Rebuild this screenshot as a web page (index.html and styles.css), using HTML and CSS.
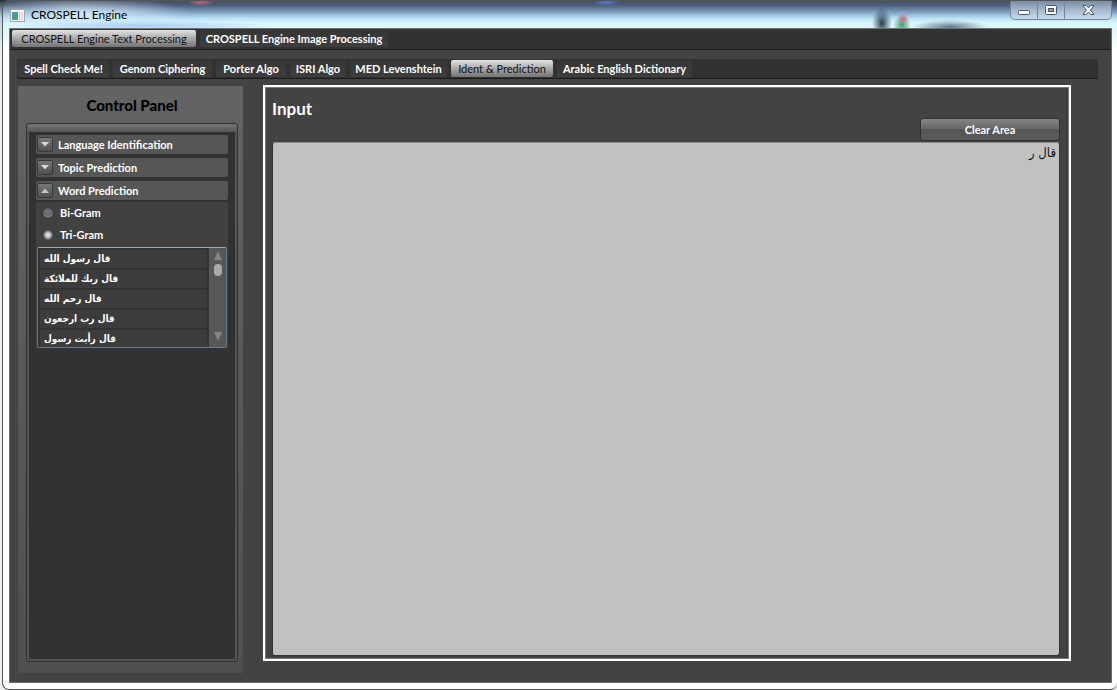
FILE: index.html
```html
<!DOCTYPE html>
<html lang="en">
<head>
<meta charset="utf-8">
<title>CROSPELL Engine</title>
<link rel="stylesheet" href="styles.css">
</head>
<body>
<div class="window">
  <header class="titlebar">
    <svg class="app-icon" width="15" height="13" viewBox="0 0 15 13" aria-hidden="true">
      <defs><linearGradient id="pane" x1="0" y1="0" x2="1" y2="1"><stop offset="0" stop-color="#4a8fb8"/><stop offset="1" stop-color="#4f9f6c"/></linearGradient></defs>
      <rect x=".5" y=".5" width="14" height="12" fill="#f4f4f4" stroke="#a5a5a5"/>
      <rect x="2" y="3" width="6" height="8" fill="url(#pane)"/>
      <rect x="9" y="3" width="1" height="8" fill="#c2ccd0"/>
      <rect x="11" y="3" width="2" height="8" fill="#d9dfe1"/>
    </svg>
    <span class="window-title">CROSPELL Engine</span>
    <div class="window-buttons">
      <button class="win-btn" aria-label="Minimize"><svg width="12" height="12" viewBox="0 0 12 12"><rect x=".5" y="6.5" width="11" height="4" rx="1" fill="#fff" stroke="#4d5365"/></svg></button>
      <button class="win-btn" aria-label="Maximize"><svg width="12" height="12" viewBox="0 0 12 12"><rect x=".5" y="1.5" width="11" height="9" rx="1" fill="#fff" stroke="#4d5365"/><rect x="3.5" y="4.5" width="5" height="3" fill="#8c98ac" stroke="#4d5365"/></svg></button>
      <button class="win-btn win-close" aria-label="Close"><svg width="13" height="12" viewBox="0 0 13 12"><path d="M1 1.5h3.2l2.3 2.4 2.3-2.4H12L8.6 6l3.4 4.5H8.8L6.500 8.100 4.200 10.500H1L4.400 6z" fill="#fff" stroke="#4d5365"/></svg></button>
    </div>
  </header>

  <div class="client">
    <nav class="tabs tabs-main">
      <button class="tab selected w-text">CROSPELL Engine Text Processing</button>
      <button class="tab w-image">CROSPELL Engine Image Processing</button>
    </nav>

    <nav class="tabs tabs-sub">
      <button class="tab w-spell">Spell Check Me!</button>
      <button class="tab w-genom">Genom Ciphering</button>
      <button class="tab w-porter">Porter Algo</button>
      <button class="tab w-isri">ISRI Algo</button>
      <button class="tab w-med">MED Levenshtein</button>
      <button class="tab selected w-ident">Ident &amp; Prediction</button>
      <button class="tab w-arabic">Arabic English Dictionary</button>
    </nav>

    <main class="workspace">
      <aside class="control-panel">
        <h2 class="panel-title">Control Panel</h2>
        <div class="frame">
          <div class="frame-body">
            <button class="section"><span class="expander"><svg width="8" height="5" viewBox="0 0 8 5"><path d="M0 0h8L4 4.500z" fill="#d8d8d8"/></svg></span>Language Identification</button>
            <button class="section"><span class="expander"><svg width="8" height="5" viewBox="0 0 8 5"><path d="M0 0h8L4 4.500z" fill="#d8d8d8"/></svg></span>Topic Prediction</button>
            <button class="section" aria-expanded="true"><span class="expander"><svg width="8" height="5" viewBox="0 0 8 5"><path d="M0 5h8L4 .5z" fill="#c4c4c4"/></svg></span>Word Prediction</button>
            <div class="section-content">
              <label class="option"><input type="radio" name="gram">Bi-Gram</label>
              <label class="option"><input type="radio" name="gram" checked>Tri-Gram</label>
              <div class="listbox">
                <ul class="items">
                  <li dir="rtl">قال رسول الله</li>
                  <li dir="rtl">قال ربك للملائكة</li>
                  <li dir="rtl">قال رحم الله</li>
                  <li dir="rtl">قال رب ارجعون</li>
                  <li dir="rtl">قال رأيت رسول</li>
                </ul>
                <div class="scrollbar">
                  <svg width="8" height="9" viewBox="0 0 8 9"><path d="M4 0l4 9H0z" fill="#858585"/></svg>
                  <span class="thumb"></span>
                  <svg width="8" height="9" viewBox="0 0 8 9"><path d="M0 0h8L4 9z" fill="#858585"/></svg>
                </div>
              </div>
            </div>
          </div>
        </div>
      </aside>

      <section class="input-panel">
        <div class="input-head">
          <label class="input-title" for="input">Input</label>
          <button class="clear">Clear Area</button>
        </div>
        <textarea id="input" class="input-area" dir="rtl">قال ر</textarea>
      </section>
    </main>
  </div>
</div>
</body>
</html>
```

FILE: styles.css
```css
* { box-sizing: border-box; }

body {
  margin: 0;
  min-height: 100vh;
  display: flex;
  background: linear-gradient(#26303f, #b9d6ea 18px, #f4f4f4 60px, #f0f0f0);
  font: 700 11px/16px Lato, "DejaVu Sans", sans-serif;
  color: #fff;
}

button, input, textarea { font: inherit; color: inherit; margin: 0; }

.window {
  flex: 1;
  display: flex;
  flex-direction: column;
  margin-left: 2px;
  padding: 0 5px 6px 6px;
  border: 1px solid #555;
  border-right: 0;
  border-radius: 7px;
  background:
    radial-gradient(ellipse 10px 16px at 879px 22px, #2d3d52 0, transparent 100%),
    radial-gradient(circle at 900px 18px, #c26a78 0, transparent 6px),
    radial-gradient(circle at 899px 24px, #3f9a70 0, transparent 9px),
    radial-gradient(ellipse 38px 7px at 947px 26px, #61768a 0, transparent 100%),
    radial-gradient(ellipse 130px 6px at 140px 25px, #aacdf2 0, transparent 100%),
    radial-gradient(ellipse 110px 18px at 80px 14px, #d3eafa 0, transparent 100%),
    radial-gradient(ellipse 14px 4px at 198px 1px, #b56876 0, transparent 100%),
    radial-gradient(ellipse 14px 4px at 603px 1px, #5c78c8 0, transparent 100%),
    linear-gradient(#454f66 0, #4b5b74 4px, #7b9dc0 11px, #b8dff4 17px, #daf8fc 22px, #dff6fb 28px, #fff 48px);
}

.titlebar {
  display: flex;
  height: 27px;
  padding-left: 1px;
}
.app-icon { margin-top: 8px; }
.window-title {
  margin: 5px auto 0 6px;
  font-weight: 400;
  font-size: 12px;
  line-height: 18px;
  color: #000;
}
.window-buttons {
  display: flex;
  height: 19px;
  border: 1px solid #74859c;
  border-top: 0;
  border-radius: 0 0 5px 5px;
  background: linear-gradient(#7c8ba5, #a7b8cd 9px, #c5dcea);
  overflow: hidden;
}
.win-btn {
  display: flex;
  align-items: center;
  justify-content: center;
  width: 27px;
  padding: 0;
  border: 0;
  border-right: 1px solid #74859c;
  background: none;
}
.win-close { width: 46px; border-right: 0; }

.client {
  flex: 1;
  display: flex;
  flex-direction: column;
  border: 1px solid #707070;
  background: #434343;
}

.tabs {
  display: flex;
  gap: 4px;
  height: 20px;
  padding: 1px 1px 2px;
  background: #323232;
  border-bottom: 1px solid #1c1c1c;
}
.tabs-main { padding-left: 2px; height: 21px; }
.tabs-sub {
  margin: 9px 13px 0 7px;
  border-radius: 2px;
}
.tab {
  height: 17px;
  padding: 0;
  border: 0;
  border-radius: 2px;
  background: linear-gradient(#353535, #3e3e3e);
  white-space: nowrap;
  line-height: 16px;
}
.tab.selected {
  background: linear-gradient(#e4e4e4, #a9a9a9 50%, #737373);
  color: #111;
  font-weight: 400;
}
.w-text { width: 184px; }
.w-image { width: 188px; }
.w-spell { width: 91px; }
.w-genom { width: 99px; }
.w-porter { width: 70px; }
.w-isri { width: 56px; }
.w-med { width: 97px; }
.w-ident { width: 102px; }
.w-arabic { width: 135px; }

.workspace {
  flex: 1;
  display: flex;
  gap: 20px;
  padding: 6px 40px 9px 8px;
}

.control-panel {
  width: 225px;
  display: flex;
  flex-direction: column;
  margin-top: 1px;
  padding: 9px 5px 11px 8px;
  background: linear-gradient(#636363, #4f4f4f);
}
.panel-title {
  margin: 0 0 8px;
  font-size: 15px;
  font-weight: 900;
  line-height: 20px;
  text-align: center;
  color: #000;
}
.frame {
  flex: 1;
  display: flex;
  padding: 8px 2px 2px;
  border: 1px solid #303030;
  border-radius: 3px;
  background: linear-gradient(#777, #555 8px);
}
.frame-body {
  flex: 1;
  display: flex;
  flex-direction: column;
  gap: 4px;
  padding: 3px 7px;
  background: #323232;
}
.section {
  display: flex;
  align-items: center;
  gap: 5px;
  height: 19px;
  padding: 0 1px;
  border: 0;
  border-radius: 2px;
  background: #565656;
}
.expander {
  display: flex;
  align-items: center;
  justify-content: center;
  width: 16px;
  height: 15px;
  border: 1px solid #373737;
  border-radius: 2px;
  background: linear-gradient(#777, #505050);
}
.section-content {
  margin-top: -2px;
  background: #414141;
  border-radius: 2px;
}
.option {
  display: flex;
  align-items: center;
  gap: 6px;
  height: 22px;
  padding-left: 6px;
}
.option input {
  appearance: none;
  width: 12px;
  height: 12px;
  border: 1px solid #353535;
  border-radius: 50%;
  background: linear-gradient(#666, #777);
}
.option input:checked {
  background: radial-gradient(circle, #ddd 0, #d4d4d4 2px, #707070 4px);
}
.listbox {
  display: flex;
  height: 101px;
  margin: 1px 1px 0;
  border: 1px solid #65788a;
  border-top-color: #9caab6;
  border-radius: 2px;
  background: #323232;
  overflow: hidden;
}
.items {
  flex: 1;
  display: flex;
  flex-direction: column;
  gap: 2px;
  margin: 0;
  padding: 2px;
  list-style: none;
}
.items li {
  flex: none;
  height: 18px;
  padding: 0 4px;
  background: #3c3c3c;
  font: 700 10px/18px "DejaVu Sans Condensed", "DejaVu Sans", sans-serif;
  text-align: left;
  white-space: nowrap;
}
.scrollbar {
  width: 17px;
  display: flex;
  flex-direction: column;
  align-items: center;
  gap: 4px;
  padding: 3px 0 6px;
  background: #575757;
}
.thumb {
  width: 8px;
  height: 12px;
  margin-bottom: auto;
  border-radius: 4px;
  background: #aaa;
}

.input-panel {
  flex: 1;
  display: flex;
  flex-direction: column;
  margin-bottom: 12px;
  padding: 4px 9px 3px 7px;
  border: 2px solid #fff;
  outline: 1px solid #777;
  outline-offset: -3px;
}
.input-head {
  display: flex;
  justify-content: space-between;
  align-items: flex-start;
  height: 51px;
}
.input-title {
  margin-top: 7px;
  font-size: 17px;
  line-height: 22px;
}
.clear {
  width: 140px;
  height: 23px;
  margin-top: 27px;
  padding: 0;
  border: 1px solid #303030;
  border-radius: 3px;
  background: linear-gradient(#858585, #666 49%, #555 50%, #5b5b5b);
}
.input-area {
  flex: 1;
  width: 100%;
  padding: 0 3px;
  border: 1px solid #333;
  border-top-color: #8a8a8a;
  border-radius: 3px;
  background: #c1c1c1;
  color: #111;
  font: 400 13px/20px "DejaVu Sans Condensed", "DejaVu Sans", sans-serif;
  resize: none;
  outline: 0;
}
```
